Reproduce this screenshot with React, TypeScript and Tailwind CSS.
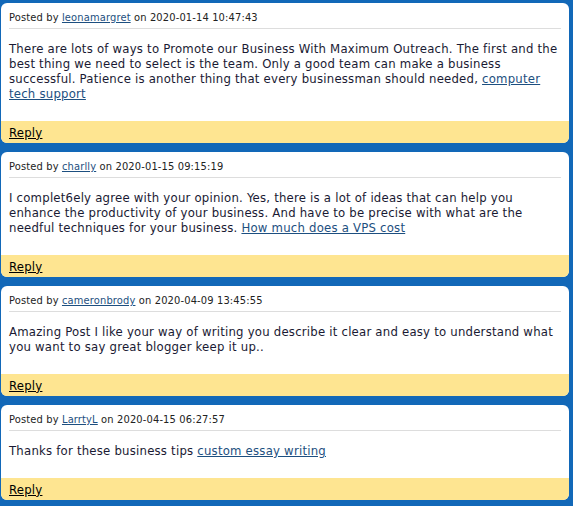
type Comment = {
  author: string
  date: string
  text: string
  link?: string
}

const comments: Comment[] = [
  {
    author: 'leonamargret',
    date: '2020-01-14 10:47:43',
    text: 'There are lots of ways to Promote our Business With Maximum Outreach. The first and the best thing we need to select is the team. Only a good team can make a business successful. Patience is another thing that every businessman should needed, ',
    link: 'computer tech support',
  },
  {
    author: 'charlly',
    date: '2020-01-15 09:15:19',
    text: 'I complet6ely agree with your opinion. Yes, there is a lot of ideas that can help you enhance the productivity of your business. And have to be precise with what are the needful techniques for your business. ',
    link: 'How much does a VPS cost',
  },
  {
    author: 'cameronbrody',
    date: '2020-04-09 13:45:55',
    text: 'Amazing Post I like your way of writing you describe it clear and easy to understand what you want to say great blogger keep it up..',
  },
  {
    author: 'LarrtyL',
    date: '2020-04-15 06:27:57',
    text: 'Thanks for these business tips ',
    link: 'custom essay writing',
  },
]

function CommentCard({ comment }: { comment: Comment }) {
  return (
    <div className="bg-white rounded-[6px] overflow-hidden">
      <div className="px-2 pt-[8px]">
        <div className="text-[11px] leading-[14px] tracking-[0.15px] text-[#222] pb-[3px] border-b border-[#dddddd]">
          Posted by{' '}
          <a href="#" className="text-[#1d4f80] underline">
            {comment.author}
          </a>{' '}
          on {comment.date}
        </div>
      </div>
      <p className="px-2 pt-[12px] pb-[20px] text-[13px] leading-[15px] tracking-[0.22px] text-[#1a1a33]">
        {comment.text}
        {comment.link && (
          <a href="#" className="text-[#1d4f80] underline">
            {comment.link}
          </a>
        )}
      </p>
      <div className="bg-[#fee591] h-[22px] flex items-center pl-2">
        <a href="#" className="text-[13px] leading-[15px] tracking-[0.22px] text-black underline">
          Reply
        </a>
      </div>
    </div>
  )
}

export default function App() {
  return (
    <div
      className="bg-[#1268b8] w-[573px] h-[506px] pl-px pr-[4px] pt-[3px] flex flex-col gap-[9px]"
      style={{ fontFamily: '"DejaVu Sans Condensed", "DejaVu Sans", Tahoma, sans-serif' }}
    >
      {comments.map((c) => (
        <CommentCard key={c.author} comment={c} />
      ))}
    </div>
  )
}
